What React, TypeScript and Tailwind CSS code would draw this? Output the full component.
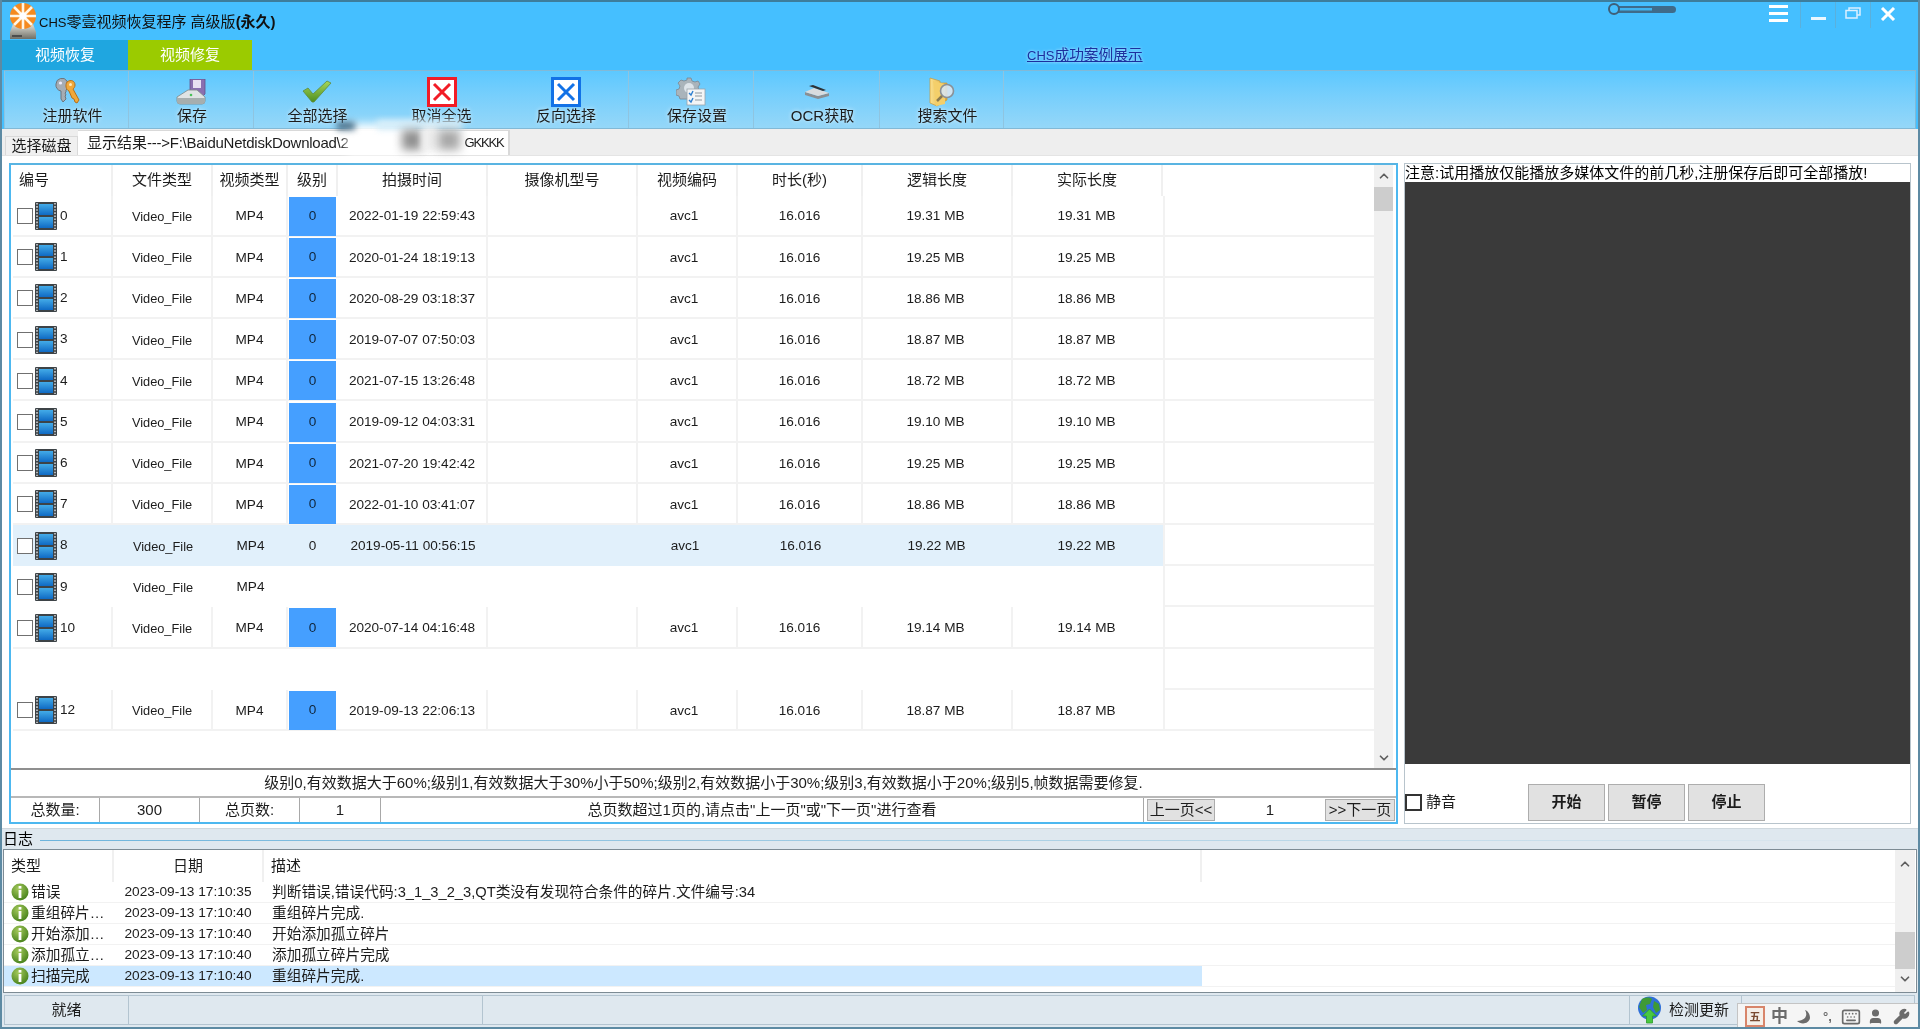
import React from "react";
import { ChevronUp, ChevronDown, Keyboard, User, Wrench } from "lucide-react";

const Logo = () => (
  <svg width="30" height="38" viewBox="0 0 30 38" className="ml-[6px] mt-[1px] shrink-0 relative z-10">
    <defs>
      <linearGradient id="drv" x1="0" y1="0" x2="0" y2="1">
        <stop offset="0" stopColor="#e2e2da" />
        <stop offset="1" stopColor="#6f6f67" />
      </linearGradient>
    </defs>
    <path d="M5 21h20l3 8v7H2v-7z" fill="url(#drv)" />
    <rect x="4" y="32" width="10" height="2" fill="#4d4d4d" />
    <circle cx="15" cy="13" r="13" fill="#f58a1f" />
    <g stroke="#fff6e6" strokeWidth="2.6">
      <path d="M15 13V0M15 13V26M15 13H2M15 13H28M15 13L6 4M15 13L24 4M15 13L6 22M15 13L24 22" />
    </g>
    <circle cx="15" cy="13" r="3.5" fill="#fff" />
  </svg>
);

const KeysIcon = () => (
  <svg width="26" height="28" viewBox="0 0 26 28">
    <path d="M2 6a6 6 0 0 1 11-3l1 7-2 2v2l-1 1 1 2-1 1 1 3-3 3-2-3V13A6 6 0 0 1 2 6z" fill="#a6adb4" stroke="#6d757c" strokeWidth="1" />
    <circle cx="6.5" cy="5" r="1.6" fill="#eef" />
    <path d="M13 4c4-3 8-1 8 3 0 2-1 3-2 4l6 11-2 3-2-1-1-3-2-1-3-7c-3-1-4-6-2-9z" fill="#f0a83a" stroke="#b5701a" strokeWidth="1" />
    <circle cx="16.5" cy="6.5" r="1.5" fill="#ffe9b8" />
  </svg>
);

const SaveIcon = () => (
  <svg width="30" height="26" viewBox="0 0 30 26">
    <path d="M14 0h15v15l-3 3H14z" fill="#8a6fb0" stroke="#62508a" strokeWidth="0.8" />
    <rect x="17" y="1" width="8" height="8" fill="#e8e0f2" />
    <path d="M1 18l11-7h9l8 7v4q0 3-3 3H4q-3 0-3-3z" fill="#dfe3e4" stroke="#7d8687" strokeWidth="0.8" />
    <path d="M1 19h28v3q0 3-3 3H4q-3 0-3-3z" fill="#a6aeae" />
    <circle cx="15" cy="16" r="1.3" fill="#48c158" />
  </svg>
);

const CheckIcon = () => (
  <svg width="30" height="23" viewBox="0 0 30 23">
    <defs>
      <linearGradient id="chk" x1="0" y1="0" x2="0" y2="1">
        <stop offset="0" stopColor="#a6d75a" />
        <stop offset="1" stopColor="#4e8f1f" />
      </linearGradient>
    </defs>
    <path d="M1 11l5-3 5 6L25 1l4 2-17 19h-2z" fill="url(#chk)" stroke="#5d8a40" strokeWidth="0.8" />
  </svg>
);

const XBox = ({ color }: { color: string }) => (
  <svg width="30" height="30" viewBox="0 0 30 30" className="relative z-10">
    <rect x="1.5" y="1.5" width="27" height="27" fill="#fff" stroke={color} strokeWidth="3" />
    <path d="M7 7L23 23M23 7L7 23" stroke={color} strokeWidth="3" />
  </svg>
);

const GearIcon = () => (
  <svg width="30" height="29" viewBox="0 0 30 29">
    <path d="M11 1h4l1 3 3 1 3-1 2 3-2 3 1 3 3 1v4l-3 1-1 3H4l-1-3-3-1v-5l3-1 1-3-2-3 3-3 3 1 3-1z" fill="#aab4bb" stroke="#7c8790" strokeWidth="0.8" />
    <circle cx="13" cy="11" r="5" fill="#dde4ea" />
    <rect x="11" y="12" width="18" height="16" fill="#f4f5f6" stroke="#9aa4ac" strokeWidth="0.8" />
    <path d="M13 16l2 2 2-4M13 23l2 2 2-4" stroke="#2f7fd0" strokeWidth="1.4" fill="none" />
    <path d="M19 16h7M19 19h7M19 23h7" stroke="#8e979e" strokeWidth="1.2" />
  </svg>
);

const ScannerIcon = () => (
  <svg width="26" height="14" viewBox="0 0 26 14">
    <path d="M1 7L14 11 25 8v3l-11 3L1 10z" fill="#8a8f93" />
    <path d="M1 7L10 3l15 5-11 3z" fill="#d9dcde" />
    <path d="M5 1L9 0l13 5-3 1z" fill="#2d3236" />
  </svg>
);

const FolderIcon = () => (
  <svg width="26" height="30" viewBox="0 0 26 30">
    <defs>
      <linearGradient id="fld" x1="0" y1="0" x2="1" y2="0">
        <stop offset="0" stopColor="#fbe08c" />
        <stop offset="1" stopColor="#dba93a" />
      </linearGradient>
    </defs>
    <path d="M1 1l10 3v2l7 0v17L8 29 1 26z" fill="url(#fld)" stroke="#c79a3a" strokeWidth="0.7" />
    <path d="M4 4l12 3v20l-9 2z" fill="#f4cf6a" />
    <circle cx="18" cy="14" r="6.5" fill="#d9e6ee" fillOpacity="0.9" stroke="#8a9197" strokeWidth="1.6" />
    <path d="M13 19l-5 5" stroke="#8a7a50" strokeWidth="2.5" />
  </svg>
);

const Film = () => (
  <svg width="22" height="28" viewBox="0 0 22 28" className="shrink-0">
    <defs>
      <linearGradient id="flm" x1="0" y1="0" x2="0" y2="1">
        <stop offset="0" stopColor="#43abe8" />
        <stop offset="1" stopColor="#0f6ac4" />
      </linearGradient>
    </defs>
    <rect x="0" y="0" width="22" height="28" rx="1" fill="#3d4347" />
    <rect x="4" y="2" width="14" height="11" fill="url(#flm)" />
    <rect x="4" y="15" width="14" height="11" fill="url(#flm)" />
    <path d="M2 1v26M20 1v26" stroke="#e4e6e8" strokeWidth="1.4" strokeDasharray="1.6 1.5" />
  </svg>
);

const InfoDot = () => (
  <svg width="18" height="18" viewBox="0 0 18 18" className="shrink-0">
    <defs>
      <radialGradient id="dot" cx="0.4" cy="0.3" r="0.8">
        <stop offset="0" stopColor="#a4c95c" />
        <stop offset="1" stopColor="#3d7a14" />
      </radialGradient>
    </defs>
    <circle cx="9" cy="9" r="8.5" fill="url(#dot)" />
    <rect x="7.6" y="3" width="2.8" height="2.6" fill="#fff" />
    <rect x="7.6" y="7" width="2.8" height="8" fill="#fff" />
  </svg>
);

const Globe = () => (
  <svg width="25" height="28" viewBox="0 0 25 28" className="shrink-0">
    <circle cx="12.5" cy="12" r="11.5" fill="#2f6fd8" />
    <path d="M5 3c4-2 8-2 10 0l-2 5-4 1 1 5-4 3-4-6zM17 5l5 3 1 6-4 3-3-6z" fill="#3f9a35" />
    <path d="M12.5 13l7 7h-4v7h-6v-7h-4z" fill="#49c840" stroke="#2b9a2a" strokeWidth="0.8" />
  </svg>
);

const Toolbar = () => (
  <div className="h-[59px] shrink-0 border-t border-b border-[#82b9d6] bg-gradient-to-b from-[#5cc8ff] to-[#95d7f8] flex ml-[2px] mr-[2px] border-r text-[15px]">
    <div className="w-[125px] flex flex-col items-center border-l border-r border-[#8fc4e0]">
      <div className="h-[35px] pt-[6px] flex items-center"><KeysIcon /></div>
      <div className="h-[20px] leading-[20px] ml-3 [text-shadow:0_0_4px_rgba(255,255,255,0.8)]">注册软件</div>
    </div>
    <div className="w-[125px] flex flex-col items-center border-r border-[#8fc4e0]">
      <div className="h-[35px] pt-[6px] flex items-center"><SaveIcon /></div>
      <div className="h-[20px] leading-[20px] ml-[2px] [text-shadow:0_0_4px_rgba(255,255,255,0.8)]">保存</div>
    </div>
    <div className="w-[125px] flex flex-col items-center">
      <div className="h-[35px] pt-[6px] flex items-center"><CheckIcon /></div>
      <div className="h-[20px] leading-[20px] ml-[2px] [text-shadow:0_0_4px_rgba(255,255,255,0.8)]">全部选择</div>
    </div>
    <div className="w-[125px] flex flex-col items-center">
      <div className="h-[35px] pt-[6px] flex items-center"><XBox color="#f21c26" /></div>
      <div className="h-[20px] leading-[20px] [text-shadow:0_0_4px_rgba(255,255,255,0.8)]">取消全选</div>
    </div>
    <div className="w-[125px] flex flex-col items-center border-r border-[#8fc4e0]">
      <div className="h-[35px] pt-[6px] flex items-center"><XBox color="#1272e6" /></div>
      <div className="h-[20px] leading-[20px] [text-shadow:0_0_4px_rgba(255,255,255,0.8)]">反向选择</div>
    </div>
    <div className="w-[125px] flex flex-col items-center border-r border-[#8fc4e0]">
      <div className="h-[35px] pt-[6px] flex items-center"><GearIcon /></div>
      <div className="h-[20px] leading-[20px] ml-3 [text-shadow:0_0_4px_rgba(255,255,255,0.8)]">保存设置</div>
    </div>
    <div className="w-[126px] flex flex-col items-center border-r border-[#8fc4e0]">
      <div className="h-[35px] pt-[6px] flex items-center"><ScannerIcon /></div>
      <div className="h-[20px] leading-[20px] ml-3 [text-shadow:0_0_4px_rgba(255,255,255,0.8)]">OCR获取</div>
    </div>
    <div className="w-[124px] flex flex-col items-center border-r border-[#8fc4e0]">
      <div className="h-[35px] pt-[6px] flex items-center"><FolderIcon /></div>
      <div className="h-[20px] leading-[20px] ml-3 [text-shadow:0_0_4px_rgba(255,255,255,0.8)]">搜索文件</div>
    </div>
  </div>
);

type Row = { n: number; date?: string; size?: string; blank?: boolean; hl?: boolean; noLines?: boolean; partial?: boolean };

const rows: Row[] = [
  { n: 0, date: "2022-01-19 22:59:43", size: "19.31 MB" },
  { n: 1, date: "2020-01-24 18:19:13", size: "19.25 MB" },
  { n: 2, date: "2020-08-29 03:18:37", size: "18.86 MB" },
  { n: 3, date: "2019-07-07 07:50:03", size: "18.87 MB" },
  { n: 4, date: "2021-07-15 13:26:48", size: "18.72 MB" },
  { n: 5, date: "2019-09-12 04:03:31", size: "19.10 MB" },
  { n: 6, date: "2021-07-20 19:42:42", size: "19.25 MB" },
  { n: 7, date: "2022-01-10 03:41:07", size: "18.86 MB" },
  { n: 8, date: "2019-05-11 00:56:15", size: "19.22 MB", hl: true, noLines: true },
  { n: 9, partial: true, noLines: true },
  { n: 10, date: "2020-07-14 04:16:48", size: "19.14 MB" },
  { n: 11, blank: true, noLines: true },
  { n: 12, date: "2019-09-13 22:06:13", size: "18.87 MB" },
];

const Cell = ({ w, lines, children }: { w: string; lines: boolean; children?: React.ReactNode }) => (
  <div className={`${w} h-full shrink-0 flex items-center justify-center pt-[1px] ${lines ? "border-r-2 border-[#f2f2f2]" : ""}`}>{children}</div>
);

const DataRow = ({ r }: { r: Row }) => {
  const lines = !r.noLines;
  return (
    <div className="h-[41.2px] shrink-0 flex">
      <div className={`w-[1150px] shrink-0 flex ${r.hl ? "bg-[#e1f0fb]" : ""} ${lines ? "shadow-[inset_0_-2px_0_#f2f2f2]" : ""}`}>
        {r.blank ? null : (
          <>
            <div className={`w-[100px] h-full shrink-0 flex items-center pl-[4px] ${lines ? "border-r-2 border-[#f2f2f2]" : ""}`}>
              <div className="w-[16px] h-[16px] border border-[#707070] bg-white shrink-0" />
              <div className="ml-[2px]"><Film /></div>
              <span className="ml-[3px]">{r.n}</span>
            </div>
            <Cell w="w-[100px]" lines={lines}><span className="text-[12.8px]">Video_File</span></Cell>
            <Cell w="w-[75px]" lines={lines}>MP4</Cell>
            <div className="w-[50px] h-full shrink-0 flex items-center">
              {r.partial ? null : r.hl ? (
                <div className="w-[47px] ml-[1px] text-center pt-[1px]">0</div>
              ) : (
                <div className="w-[47px] ml-[1px] h-[39px] bg-[#459fff] flex items-center justify-center text-[#10253a]">0</div>
              )}
            </div>
            {r.partial ? null : (
              <>
                <Cell w="w-[150px]" lines={lines}>{r.date}</Cell>
                <Cell w="w-[150px]" lines={lines} />
                <Cell w="w-[100px]" lines={lines}><span className="mr-[6px]">avc1</span></Cell>
                <Cell w="w-[125px]" lines={lines}>16.016</Cell>
                <Cell w="w-[150px]" lines={lines}><span className="mr-[3px]">{r.size}</span></Cell>
                <div className="w-[150px] h-full shrink-0 flex items-center justify-center pt-[1px]"><span className="mr-[3px]">{r.size}</span></div>
              </>
            )}
          </>
        )}
      </div>
      <div className="flex-1 border-l-2 border-b-2 border-[#f2f2f2]" />
    </div>
  );
};

const HeadCell = ({ w, children, left }: { w: string; children?: React.ReactNode; left?: boolean }) => (
  <div className={`${w} h-full shrink-0 flex items-center border-r-2 border-[#f0f0f0] text-[15px] ${left ? "pl-[6px]" : "justify-center"}`}>{children}</div>
);

const logs = [
  ["错误", "2023-09-13 17:10:35", "判断错误,错误代码:3_1_3_2_3,QT类没有发现符合条件的碎片.文件编号:34"],
  ["重组碎片…", "2023-09-13 17:10:40", "重组碎片完成."],
  ["开始添加…", "2023-09-13 17:10:40", "开始添加孤立碎片"],
  ["添加孤立…", "2023-09-13 17:10:40", "添加孤立碎片完成"],
  ["扫描完成", "2023-09-13 17:10:40", "重组碎片完成."],
];

export default function App() {
  return (
    <div className="relative w-[1920px] h-[1029px] overflow-hidden bg-[#dfe8ef] border-x-2 border-b-2 border-[#5d8aa3] flex flex-col text-[13.6px] text-[#1c1c1c] font-['Liberation_Sans','Noto_Sans_CJK_SC',sans-serif] blur-[0.45px]">
      {/* title bar */}
      <div className="h-[40px] shrink-0 border-t-2 border-[#3d7d9c] bg-[#45bfff] flex items-start">
        <Logo />
        <div className="ml-[1px] mt-[10px] leading-[20px] text-[15px] text-[#111] whitespace-pre">
          <span className="text-[13px]">CHS</span>零壹视频恢复程序 高级版<b>(永久)</b>
        </div>
        <div className="ml-auto flex items-start">
          <svg width="68" height="14" viewBox="0 0 68 14" className="mt-[0px]">
            <rect x="6" y="4" width="62" height="7" rx="3.5" fill="#3f6b8a" />
            <rect x="10" y="6" width="34" height="2.5" fill="#3fb4f0" />
            <circle cx="6" cy="7" r="5" fill="#45bfff" stroke="#3f5f78" strokeWidth="2" />
          </svg>
          <div className="ml-[93px] mt-[3px] w-[19px] flex flex-col gap-[4px]">
            <div className="h-[3px] bg-white" />
            <div className="h-[3px] bg-white" />
            <div className="h-[3px] bg-white" />
          </div>
          <div className="ml-[12px] w-[35px] h-[26px] border-l border-[#5ab0dc] flex justify-center pt-[15px]">
            <div className="w-[15px] h-[3px] bg-[#eaf7ff]" />
          </div>
          <div className="w-[35px] h-[26px] border-l border-[#5ab0dc] flex justify-center pt-[5px]">
            <svg width="16" height="12" viewBox="0 0 16 12" fill="none" stroke="#dcefff" strokeWidth="1.5">
              <rect x="1" y="3.5" width="11" height="7.5" />
              <path d="M4 3V1h11v7h-3" />
            </svg>
          </div>
          <div className="w-[35px] h-[26px] border-l border-[#5ab0dc] flex justify-center pt-[5px] mr-[13px]">
            <svg width="16" height="14" viewBox="0 0 16 14" stroke="#fff" strokeWidth="3">
              <path d="M2 1L14 13M14 1L2 13" />
            </svg>
          </div>
        </div>
      </div>

      {/* function tabs */}
      <div className="h-[30px] shrink-0 bg-[#45bfff] flex items-center">
        <div className="w-[126px] h-full bg-[#1fa6e0] text-white text-[15px] flex items-center justify-center">视频恢复</div>
        <div className="w-[124px] h-full bg-[#9bcb00] text-white text-[15px] flex items-center justify-center">视频修复</div>
        <a className="ml-[775px] text-[14.7px] text-[#1b2f9f] underline [text-shadow:0_0_3px_rgba(255,255,255,0.7)]">
          <span className="text-[13px]">CHS</span>成功案例展示
        </a>
      </div>

      <div className="bg-[#45bfff]"><Toolbar /></div>

      {/* tab strip */}
      <div className="h-[26px] shrink-0 bg-[#eeeeee] flex items-end pl-[3px] text-[15px]">
        <div className="w-[73px] h-[19px] bg-[#f0f0f0] border border-b-0 border-[#d9d9d9] flex items-center justify-center">选择磁盘</div>
        <div className="w-[432px] h-[25px] bg-white border-r-2 border-t border-[#d9d9d9] pl-[9px] flex items-center whitespace-nowrap">
          显示结果<span className="tracking-[-0.25px]">---&gt;F:\BaiduNetdiskDownload\2</span><span className="ml-[116px] text-[13px] tracking-[-1.2px]">GKKKK</span>
        </div>
      </div>

      {/* main area */}
      <div className="h-[673px] shrink-0 bg-white flex pt-[7px] pl-[7px] border-t border-[#e4e4e4]">
        <div className="w-[1389px] h-[661px] shrink-0 border-2 border-[#4db8f0] border-t-[#59b4e2] flex flex-col">
          <div className="h-[605px] shrink-0 flex border-b-2 border-[#8f8f8f] pl-[2px]">
            <div className="w-[1361px] shrink-0 flex flex-col">
              <div className="h-[30.5px] shrink-0 flex">
                <HeadCell w="w-[100px]" left>编号</HeadCell>
                <HeadCell w="w-[100px]">文件类型</HeadCell>
                <HeadCell w="w-[75px]">视频类型</HeadCell>
                <HeadCell w="w-[50px]">级别</HeadCell>
                <HeadCell w="w-[150px]">拍摄时间</HeadCell>
                <HeadCell w="w-[150px]">摄像机型号</HeadCell>
                <HeadCell w="w-[100px]">视频编码</HeadCell>
                <HeadCell w="w-[125px]">时长(秒)</HeadCell>
                <HeadCell w="w-[150px]">逻辑长度</HeadCell>
                <HeadCell w="w-[150px]">实际长度</HeadCell>
              </div>
              {rows.map((r) => (
                <DataRow key={r.n} r={r} />
              ))}
            </div>
            <div className="w-[19px] shrink-0 bg-[#f0f0f0] flex flex-col items-center">
              <div className="h-[22px] flex items-center"><ChevronUp size={14} strokeWidth={3} color="#5f5f5f" /></div>
              <div className="w-full h-[24px] bg-[#cdcdcd]" />
              <div className="mt-auto h-[20px] flex items-center"><ChevronDown size={14} strokeWidth={3} color="#5f5f5f" /></div>
            </div>
          </div>
          <div className="h-[28px] shrink-0 flex items-center justify-center border-b-2 border-[#b8b8b8] text-[15px]">
            级别0,有效数据大于60%;级别1,有效数据大于30%小于50%;级别2,有效数据小于30%;级别3,有效数据小于20%;级别5,帧数据需要修复.
          </div>
          <div className="flex-1 flex items-center text-[15px]">
            <div className="w-[89px] h-full border-r border-[#a8a8a8] flex items-center justify-center">总数量:</div>
            <div className="w-[100px] h-full border-r border-[#a8a8a8] flex items-center justify-center">300</div>
            <div className="w-[100px] h-full border-r border-[#a8a8a8] flex items-center justify-center">总页数:</div>
            <div className="w-[81px] h-full border-r border-[#a8a8a8] flex items-center justify-center">1</div>
            <div className="w-[763px] h-full border-r border-[#a8a8a8] flex items-center justify-center">总页数超过1页的,请点击"上一页"或"下一页"进行查看</div>
            <div className="w-[68px] h-[22px] ml-[3px] bg-[#e1e1e1] border border-[#adadad] flex items-center justify-center whitespace-nowrap">上一页&lt;&lt;</div>
            <div className="w-[110px] text-center">1</div>
            <div className="w-[70px] h-[22px] bg-[#e1e1e1] border border-[#adadad] flex items-center justify-center whitespace-nowrap">&gt;&gt;下一页</div>
          </div>
        </div>

        <div className="ml-[6px] w-[507px] h-[661px] shrink-0 border border-[#b8c4cc] flex flex-col">
          <div className="h-[18px] shrink-0 leading-[18px] text-[15px] text-black whitespace-nowrap">注意:试用播放仅能播放多媒体文件的前几秒,注册保存后即可全部播放!</div>
          <div className="h-[582px] shrink-0 bg-[#3a3a3a]" />
          <div className="flex pt-[20px]">
            <div className="w-[123px] flex items-center pb-[1px]">
              <div className="w-[17px] h-[17px] border-2 border-[#333] bg-white" />
              <span className="ml-[4px] text-[15px]">静音</span>
            </div>
            <div className="flex gap-[3px]">
              <div className="w-[77px] h-[37px] bg-[#e1e1e1] border border-[#adadad] flex items-center justify-center font-bold text-[15px]">开始</div>
              <div className="w-[77px] h-[37px] bg-[#e1e1e1] border border-[#adadad] flex items-center justify-center font-bold text-[15px]">暂停</div>
              <div className="w-[77px] h-[37px] bg-[#e1e1e1] border border-[#adadad] flex items-center justify-center font-bold text-[15px]">停止</div>
            </div>
          </div>
        </div>
      </div>

      {/* log label */}
      <div className="h-[21px] shrink-0 bg-[#dfe8ef] flex items-center pl-[1px] border-t border-[#cfd8de]">
        <span className="text-[15px] text-black">日志</span>
        <div className="flex-1 h-[1px] bg-gradient-to-r from-[#6db4dc] via-[#a8cfe4] to-[#dfe8ef] ml-[7px] mt-[2px]" />
      </div>

      {/* log list */}
      <div className="h-[144px] shrink-0 mx-[1px] bg-white border border-[#7d8b94] flex">
        <div className="w-[1891px] shrink-0 flex flex-col">
          <div className="h-[32px] shrink-0 flex text-[15px]">
            <div className="w-[110px] shrink-0 border-r-2 border-[#f0f0f0] flex items-center pl-[7px]">类型</div>
            <div className="w-[150px] shrink-0 border-r-2 border-[#f0f0f0] flex items-center justify-center">日期</div>
            <div className="w-[938px] shrink-0 border-r-2 border-[#f0f0f0] flex items-center pl-[7px]">描述</div>
          </div>
          {logs.map((l, i) => (
            <div key={i} className="h-[21px] shrink-0 flex border-b border-[#f2f2f2]">
              <div className={`w-[1198px] shrink-0 flex ${i === 4 ? "bg-[#cce8ff]" : ""}`}>
                <div className="w-[110px] shrink-0 flex items-center pl-[7px] text-[14.7px] whitespace-nowrap">
                  <InfoDot />
                  <span className="ml-[2px]">{l[0]}</span>
                </div>
                <div className="w-[150px] shrink-0 flex items-center justify-center text-[13.7px]"><span className="mr-[2px]">{l[1]}</span></div>
                <div className="flex-1 flex items-center pl-[8px] text-[14.7px] whitespace-nowrap">{l[2]}</div>
              </div>
            </div>
          ))}
        </div>
        <div className="ml-auto w-[20px] shrink-0 bg-[#f0f0f0] flex flex-col items-center mr-[1px]">
          <div className="h-[24px] flex items-center mt-[2px]"><ChevronUp size={14} strokeWidth={3} color="#5f5f5f" /></div>
          <div className="mt-[56px] w-full h-[37px] bg-[#cdcdcd]" />
          <div className="h-[20px] flex items-center"><ChevronDown size={14} strokeWidth={3} color="#5f5f5f" /></div>
        </div>
      </div>

      {/* status bar */}
      <div className="flex-1 bg-[#dfe8ef] flex pt-[2px] pl-[2px] pr-[3px] text-[15px] pb-[3px]">
        <div className="w-[125px] border border-[#b3c4d0] flex items-center justify-center">就绪</div>
        <div className="w-[354px] border-y border-r border-[#b3c4d0]" />
        <div className="w-[1147px] border-y border-r border-[#b3c4d0]" />
        <div className="w-[112px] border-y border-r border-[#b3c4d0] flex items-center pl-[7px]">
          <Globe />
          <span className="ml-[7px] whitespace-nowrap">检测更新</span>
        </div>
        <div className="flex-1 border-y border-r border-[#b3c4d0]" />
      </div>

      {/* IME bar overlays the status bar */}
      <div className="absolute left-[1735px] top-[1003px] w-[185px] h-[26px] bg-[#f5f5f5] border-l border-t border-[#c4c4c4] flex items-center pl-[7px] text-[#6b6b6b]">
        <div className="w-[20px] h-[21px] border-2 border-[#d8856a] bg-[#f5efe8] flex items-center justify-center text-[11px] font-bold text-[#7a4a30] font-['Noto_Sans_CJK_SC',sans-serif]">五</div>
        <span className="ml-[6px] text-[17px] font-bold">中</span>
        <svg width="16" height="16" viewBox="0 0 16 16" className="ml-[8px]" fill="#6b6b6b">
          <path d="M9 1c3 5 1 10-8 11 4 4 12 3 13-3 0-4-2-7-5-8z" />
        </svg>
        <span className="ml-[11px] text-[13px] font-bold">°,</span>
        <Keyboard size={20} className="ml-[9px]" />
        <User size={17} className="ml-[6px]" fill="#6b6b6b" />
        <Wrench size={17} className="ml-[9px]" fill="#6b6b6b" />
      </div>

      {/* privacy smear over the path */}
      <div className="absolute left-[345px] top-[124px] w-[70px] h-[31px] bg-white blur-[5px]" />
      <div className="absolute left-[335px] top-[122px] w-[18px] h-[8px] bg-[#4a6f88] blur-[3px]" />
      <div className="absolute left-[375px] top-[120px] w-[85px] h-[10px] bg-[#d6eefa] blur-[3px]" />
      <div className="absolute left-[400px] top-[130px] w-[20px] h-[20px] bg-[#909090] blur-[5px]" />
      <div className="absolute left-[420px] top-[127px] w-[16px] h-[24px] bg-[#eeeeee] blur-[3px]" />
      <div className="absolute left-[436px] top-[130px] w-[22px] h-[20px] bg-[#a8a8a8] blur-[5px]" />
    </div>
  );
}
